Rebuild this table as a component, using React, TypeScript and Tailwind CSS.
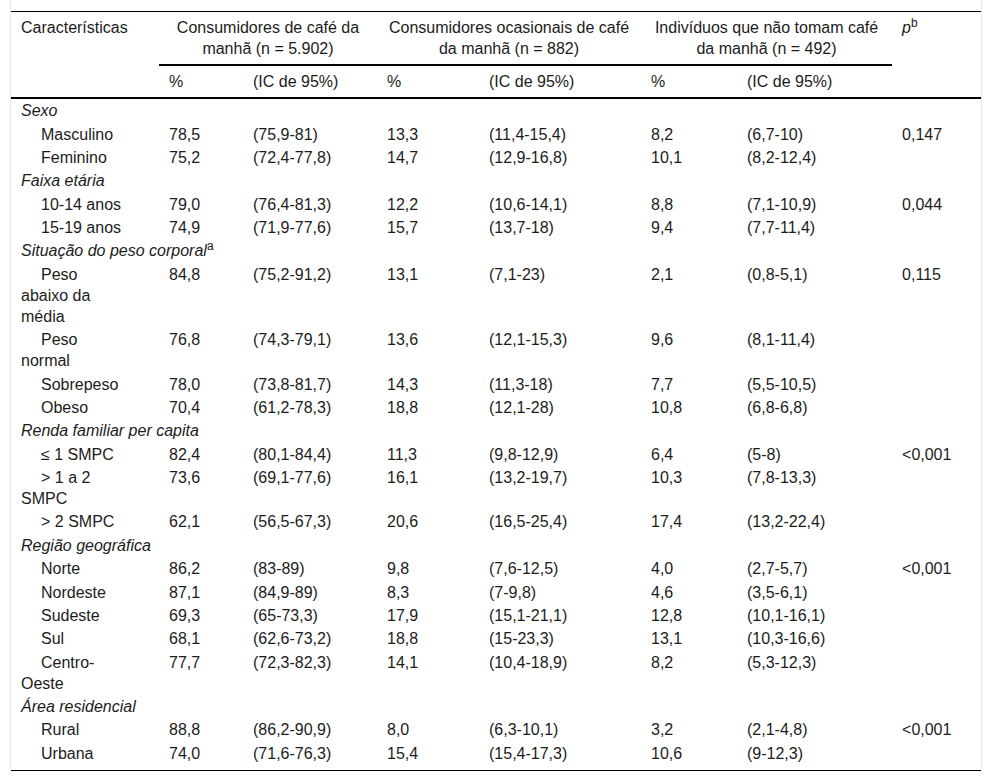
import React from 'react';

type Row =
  | { kind: 'group'; label: string; sup?: string }
  | { kind: 'item'; label: string; v: string[]; p?: string };

const rows: Row[] = [
  { kind: 'group', label: 'Sexo' },
  { kind: 'item', label: 'Masculino', v: ['78,5', '(75,9-81)', '13,3', '(11,4-15,4)', '8,2', '(6,7-10)'], p: '0,147' },
  { kind: 'item', label: 'Feminino', v: ['75,2', '(72,4-77,8)', '14,7', '(12,9-16,8)', '10,1', '(8,2-12,4)'] },
  { kind: 'group', label: 'Faixa etária' },
  { kind: 'item', label: '10-14 anos', v: ['79,0', '(76,4-81,3)', '12,2', '(10,6-14,1)', '8,8', '(7,1-10,9)'], p: '0,044' },
  { kind: 'item', label: '15-19 anos', v: ['74,9', '(71,9-77,6)', '15,7', '(13,7-18)', '9,4', '(7,7-11,4)'] },
  { kind: 'group', label: 'Situação do peso corporal', sup: 'a' },
  { kind: 'item', label: 'Peso abaixo da média', v: ['84,8', '(75,2-91,2)', '13,1', '(7,1-23)', '2,1', '(0,8-5,1)'], p: '0,115' },
  { kind: 'item', label: 'Peso normal', v: ['76,8', '(74,3-79,1)', '13,6', '(12,1-15,3)', '9,6', '(8,1-11,4)'] },
  { kind: 'item', label: 'Sobrepeso', v: ['78,0', '(73,8-81,7)', '14,3', '(11,3-18)', '7,7', '(5,5-10,5)'] },
  { kind: 'item', label: 'Obeso', v: ['70,4', '(61,2-78,3)', '18,8', '(12,1-28)', '10,8', '(6,8-6,8)'] },
  { kind: 'group', label: 'Renda familiar per capita' },
  { kind: 'item', label: '≤ 1 SMPC', v: ['82,4', '(80,1-84,4)', '11,3', '(9,8-12,9)', '6,4', '(5-8)'], p: '<0,001' },
  { kind: 'item', label: '> 1 a 2 SMPC', v: ['73,6', '(69,1-77,6)', '16,1', '(13,2-19,7)', '10,3', '(7,8-13,3)'] },
  { kind: 'item', label: '> 2 SMPC', v: ['62,1', '(56,5-67,3)', '20,6', '(16,5-25,4)', '17,4', '(13,2-22,4)'] },
  { kind: 'group', label: 'Região geográfica' },
  { kind: 'item', label: 'Norte', v: ['86,2', '(83-89)', '9,8', '(7,6-12,5)', '4,0', '(2,7-5,7)'], p: '<0,001' },
  { kind: 'item', label: 'Nordeste', v: ['87,1', '(84,9-89)', '8,3', '(7-9,8)', '4,6', '(3,5-6,1)'] },
  { kind: 'item', label: 'Sudeste', v: ['69,3', '(65-73,3)', '17,9', '(15,1-21,1)', '12,8', '(10,1-16,1)'] },
  { kind: 'item', label: 'Sul', v: ['68,1', '(62,6-73,2)', '18,8', '(15-23,3)', '13,1', '(10,3-16,6)'] },
  { kind: 'item', label: 'Centro-Oeste', v: ['77,7', '(72,3-82,3)', '14,1', '(10,4-18,9)', '8,2', '(5,3-12,3)'] },
  { kind: 'group', label: 'Área residencial' },
  { kind: 'item', label: 'Rural', v: ['88,8', '(86,2-90,9)', '8,0', '(6,3-10,1)', '3,2', '(2,1-4,8)'], p: '<0,001' },
  { kind: 'item', label: 'Urbana', v: ['74,0', '(71,6-76,3)', '15,4', '(15,4-17,3)', '10,6', '(9-12,3)'] },
];

const th = 'px-[10px] py-[5px] font-normal align-top';

export default function App() {
  return (
    <div
      className="bg-white text-[#1c1c1c] text-[16px] leading-[21px]"
      style={{ fontFamily: '"Liberation Sans", Arial, sans-serif' }}
    >
      <div className="mx-[10px] pt-[11px] border-x border-[#e8e8e8]">
        <table className="w-[970px] table-fixed border-separate border-spacing-0 border-t border-b border-black">
          <colgroup>
            <col className="w-[148px]" />
            <col className="w-[84px]" />
            <col className="w-[134px]" />
            <col className="w-[102px]" />
            <col className="w-[162px]" />
            <col className="w-[96px]" />
            <col className="w-[155px]" />
            <col className="w-[89px]" />
          </colgroup>
          <thead>
            <tr>
              <th rowSpan={2} className={`${th} text-left border-b-2 border-black`}>Características</th>
              <th colSpan={2} className={`${th} text-center border-b-2 border-black`}>
                Consumidores de café da manhã (n = 5.902)
              </th>
              <th colSpan={2} className={`${th} text-center border-b-2 border-black`}>
                Consumidores ocasionais de café da manhã (n = 882)
              </th>
              <th colSpan={2} className={`${th} text-center border-b-2 border-black`}>
                Indivíduos que não tomam café da manhã (n = 492)
              </th>
              <th rowSpan={2} className={`${th} text-left border-b-2 border-black`}>
                <i>p</i>
                <sup>b</sup>
              </th>
            </tr>
            <tr>
              {['%', '(IC de 95%)', '%', '(IC de 95%)', '%', '(IC de 95%)'].map((h, i) => (
                <th key={i} className={`${th} text-left border-b-2 border-black`}>
                  {h}
                </th>
              ))}
            </tr>
          </thead>
          <tbody>
            {rows.map((r, i) => {
              const last = i === rows.length - 1;
              const td = `px-[10px] pt-[1.2px] align-top ${last ? 'pb-[6.5px]' : 'pb-[1.2px]'}`;
              return r.kind === 'group' ? (
                <tr key={i}>
                  <td colSpan={8} className={`${td} italic`}>
                    {r.label}
                    {r.sup && <sup className="not-italic">{r.sup}</sup>}
                  </td>
                </tr>
              ) : (
                <tr key={i}>
                  <td className={`${td} pr-[36px] indent-[20px]`}>{r.label}</td>
                  {r.v.map((v, j) => (
                    <td key={j} className={td}>
                      {v}
                    </td>
                  ))}
                  <td className={td}>{r.p ?? ''}</td>
                </tr>
              );
            })}
          </tbody>
        </table>
      </div>
    </div>
  );
}
